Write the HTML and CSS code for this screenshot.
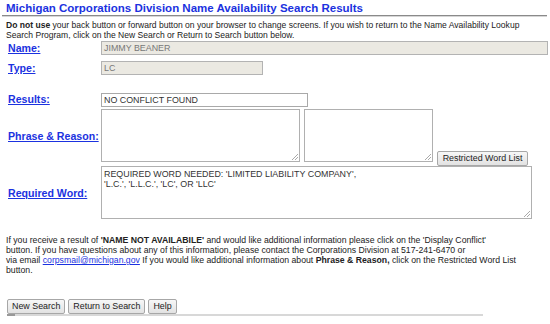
FILE: index.html
```html
<!DOCTYPE html>
<html>
<head>
<meta charset="utf-8">
<link rel="stylesheet" href="styles.css">
</head>
<body>
<div class="title">Michigan Corporations Division Name Availability Search Results</div>
<div class="rule"></div>
<p class="intro"><b>Do not use</b> your back button or forward button on your browser to change screens. If you wish to return to the Name Availability Lookup<br>Search Program, click on the New Search or Return to Search button below.</p>
<div class="form">
  <div class="row row-name">
    <a class="label" href="#">Name:</a>
    <div class="field ro wide">JIMMY BEANER</div>
  </div>
  <div class="row row-type">
    <a class="label" href="#">Type:</a>
    <div class="field ro short">LC</div>
  </div>
  <div class="row row-results">
    <a class="label lift" href="#">Results:</a>
    <div class="field res">NO CONFLICT FOUND</div>
  </div>
  <div class="row row-phrase">
    <a class="label" href="#">Phrase &amp; Reason:</a>
    <div class="ta ta1"><span class="grip"></span></div>
    <div class="ta ta2"><span class="grip"></span></div>
    <div class="btn rwl">Restricted Word List</div>
  </div>
  <div class="row row-req">
    <a class="label" href="#">Required Word:</a>
    <div class="ta ta3">REQUIRED WORD NEEDED: 'LIMITED LIABILITY COMPANY',<br>'L.C.', 'L.L.C.', 'LC', OR 'LLC'<span class="grip"></span></div>
  </div>
</div>
<p class="note">If you receive a result of <b>'NAME NOT AVAILABILE'</b> and would like additional information please click on the 'Display Conflict'<br>button. If you have questions about any of this information, please contact the Corporations Division at 517-241-6470 or<br>via email <a href="#" class="mail">corpsmail@michigan.gov</a> If you would like additional information about <b>Phrase &amp; Reason,</b> click on the Restricted Word List<br>button.</p>
<div class="buttons">
  <div class="btn">New Search</div>
  <div class="btn">Return to Search</div>
  <div class="btn">Help</div>
</div>
<div class="track"><span class="thumb"></span></div>
</body>
</html>
```
FILE: styles.css
```css
body {
  margin: 0;
  font-family: "Liberation Sans", Arial, sans-serif;
  color: #222;
  background: #fff;
  width: 550px;
  height: 324px;
  overflow: hidden;
}
.title {
  margin: 2px 0 0 6px;
  font-weight: bold;
  font-size: 11.5px;
  line-height: 12px;
  color: #1b32e0;
}
.rule {
  margin: 1px 3px 0 2px;
  border-top: 1px solid #8a8a8a;
  border-bottom: 1px solid #d6d6d6;
  height: 0;
}
.intro {
  margin: 3px 0 0 6px;
  font-size: 8.55px;
  line-height: 10px;
  color: #222;
  white-space: nowrap;
}
.form {
  margin-left: 8px;
}
.row {
  display: flex;
  align-items: center;
}
.label {
  width: 93px;
  flex: none;
  font-weight: bold;
  font-size: 10.6px;
  color: #1b32e0;
  text-decoration: underline;
  white-space: nowrap;
}
.lift {
  margin-top: -2px;
}
.field {
  box-sizing: border-box;
  height: 14px;
  border: 1px solid #a9a9a9;
  font-size: 8.9px;
  line-height: 12px;
  padding-left: 2px;
  color: #333;
}
.ro {
  background: #ebe9e2;
  color: #777;
  border-color: #b3b3b3;
}
.wide { width: 447px; }
.short { width: 162px; }
.res { width: 207px; background: #fff; }
.row-name { margin-top: 1px; }
.row-type { margin-top: 6px; }
.row-results { margin-top: 18px; }
.row-phrase { margin-top: 2px; }
.row-req { margin-top: 4px; }
.ta {
  box-sizing: border-box;
  position: relative;
  border: 1px solid #b0b0b0;
  background: #fff;
  height: 53px;
}
.ta1 { width: 199px; }
.ta2 { width: 129px; margin-left: 4px; }
.ta3 {
  width: 431px;
  height: 53px;
  font-size: 8.9px;
  line-height: 10px;
  padding: 2px 0 0 2px;
  color: #333;
}
.grip {
  position: absolute;
  right: 1px;
  bottom: 1px;
  width: 6px;
  height: 6px;
  background: linear-gradient(135deg, transparent 45%, #aaa 45%, #aaa 55%, transparent 55%, transparent 70%, #aaa 70%, #aaa 80%, transparent 80%);
}
.btn {
  box-sizing: border-box;
  height: 15px;
  border: 1px solid #a7a7a7;
  border-radius: 2px;
  background: linear-gradient(#f7f7f7, #e2e2e2);
  font-size: 8.9px;
  line-height: 13px;
  padding: 0 4px;
  color: #222;
  white-space: nowrap;
}
.rwl {
  align-self: flex-end;
  margin: 0 0 -4px 4px;
  width: 91px;
  text-align: center;
  padding: 0;
}
.note {
  margin: 16px 0 0 6px;
  font-size: 8.7px;
  line-height: 10px;
  color: #222;
  white-space: nowrap;
}
.mail { color: #1b32e0; }
.buttons {
  display: flex;
  gap: 3px;
  margin: 24px 0 0 7px;
}
.track {
  margin: 0 0 0 7px;
  width: 476px;
  height: 2px;
  background: #d8d8d8;
  position: relative;
}
.thumb {
  position: absolute;
  left: 0;
  top: 0;
  width: 8px;
  height: 2px;
  background: #999;
}
```
